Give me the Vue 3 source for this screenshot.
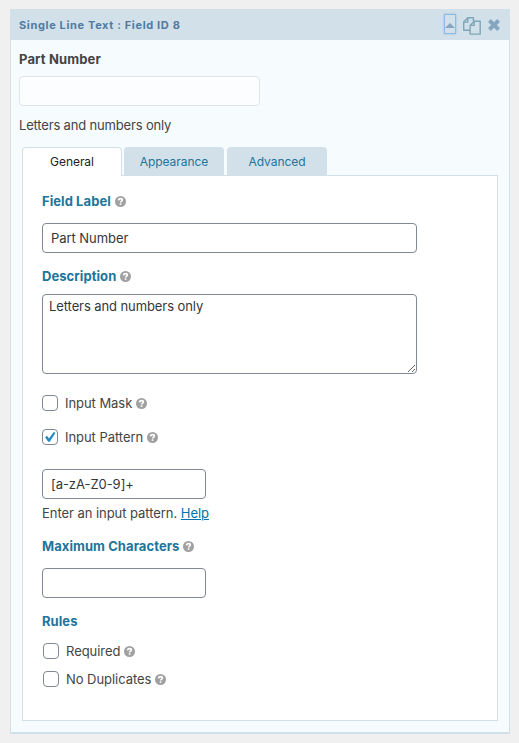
<script setup>
import { h, ref } from 'vue'

const label = ref('Part Number')
const description = ref('Letters and numbers only')
const pattern = ref('[a-zA-Z0-9]+')
const maxChars = ref('')
const active = ref('General')
const tabs = ['General', 'Appearance', 'Advanced']

const HelpIcon = () =>
  h('svg', { class: 'help-icon', width: 11, height: 11, viewBox: '0 0 11 11' }, [
    h('circle', { cx: 5.5, cy: 5.5, r: 5.5, fill: '#a0a0a0' }),
    h('path', {
      d: 'M3.5 4.4C3.6 3.1 4.5 2.6 5.5 2.6C6.7 2.6 7.4 3.2 7.4 4.1C7.4 5.2 5.6 5.2 5.6 6.6',
      fill: 'none',
      stroke: '#fff',
      'stroke-width': 1.6
    }),
    h('rect', { x: 4.7, y: 7.3, width: 1.7, height: 1.5, fill: '#fff' })
  ])
</script>

<template>
  <main class="page">
    <section class="field">
      <header class="head">
        <h1 class="head-title">Single Line Text : Field ID 8</h1>
        <div class="actions">
          <button class="toggle" aria-label="Collapse">
            <svg width="10" height="5" viewBox="0 0 10 5"><path d="M0 5L5 0L10 5Z" fill="#86a5c0" /></svg>
          </button>
          <svg class="copy" width="18" height="18" viewBox="0 0 18 18" fill="none" stroke="#7ea6b8" stroke-width="1.4" stroke-linejoin="round">
            <path d="M7.1 13.3H.7V5.1L4.8.8H10.4V4.5M4.8.8V5.1H.7" />
            <path d="M7.1 8.4L11.2 4.2H17.2V17.1H7.1ZM11.2 4.2V8.4H7.1" />
          </svg>
          <svg class="close" width="12" height="12" viewBox="0 0 12 12"><path d="M1.4 1.5L10.6 10.5M10.6 1.5L1.4 10.5" stroke="#86a5c0" stroke-width="3.9" /></svg>
        </div>
      </header>

      <div class="preview">
        <div class="preview-label">Part Number</div>
        <input class="preview-input" disabled />
        <div class="preview-note">Letters and numbers only</div>
      </div>

      <nav class="tabs">
        <button v-for="t in tabs" :key="t" class="tab" :class="{ active: active === t }" @click="active = t">{{ t }}</button>
      </nav>

      <div class="settings">
        <div class="title"><span>Field Label</span><HelpIcon /></div>
        <input v-model="label" class="text wide" />
        <div class="title desc-title"><span>Description</span><HelpIcon /></div>
        <textarea v-model="description" class="area"></textarea>

        <label class="check mask"><span class="box"></span><span>Input Mask</span><HelpIcon /></label>
        <label class="check pattern">
          <span class="box">
            <svg width="14" height="14" viewBox="0 0 14 14"><path d="M2.1 7.2L4 5.8L6 8.5L10.7 1.9L12.4 3L6.8 11.7H5.2Z" fill="#1e8cbe" /></svg>
          </span><span>Input Pattern</span><HelpIcon />
        </label>
        <input v-model="pattern" class="text" />
        <div class="hint">Enter an input pattern. <a href="#">Help</a></div>

        <div class="title max-title"><span>Maximum Characters</span><HelpIcon /></div>
        <input v-model="maxChars" class="text" />
        <div class="title rules-title"><span>Rules</span></div>
        <label class="check rule"><span class="box"></span><span>Required</span><HelpIcon /></label>
        <label class="check rule"><span class="box"></span><span>No Duplicates</span><HelpIcon /></label>
      </div>
    </section>
  </main>
</template>

<style>
body {
  background: #f0f0f0;
}
</style>

<style scoped>
* {
  box-sizing: border-box;
}
.page {
  height: 743px;
  padding: 9px 9px 9px 10px;
  font-family: Inter, sans-serif;
  font-size: 13px;
  line-height: 18px;
  letter-spacing: -0.05px;
  color: #444;
}
input,
textarea,
button {
  font: inherit;
  letter-spacing: inherit;
  margin: 0;
}
.field {
  height: 725px;
  background: #f6fbfe;
  border: 1px solid #d2e0e9;
  border-top: 0;
  border-bottom-width: 2px;
}
.head {
  display: flex;
  justify-content: space-between;
  height: 31px;
  margin: 0 -1px;
  padding: 0 10px 0 9px;
  background: #d2e0e9;
}
.head-title {
  margin: 7px 0 0;
  font-size: 11px;
  line-height: 18px;
  font-weight: 700;
  letter-spacing: 0.64px;
  color: #4f7ba3;
}
.actions {
  display: flex;
  align-items: flex-start;
}
.toggle {
  display: flex;
  align-items: center;
  justify-content: center;
  width: 12px;
  height: 20px;
  margin: 5px 7px 0 0;
  padding: 2px 0 0;
  background: none;
  border: 1px solid #8ebbe2;
  box-shadow: 0 0 2px #8ebbe2;
}
.toggle svg {
  flex: none;
}
.copy {
  margin: 8px 7px 0 0;
}
.close {
  margin-top: 10px;
}
.preview {
  height: 107px;
  padding: 10px 8px 0;
}
.preview-label {
  font-weight: 700;
  letter-spacing: 0.14px;
}
.preview-note {
  letter-spacing: -0.17px;
}
.preview-input {
  display: block;
  width: 241px;
  height: 30px;
  margin: 8px 0 10px;
  background: #fcfdff;
  border: 1px solid #e1e5e8;
  border-radius: 4px;
}
.tabs {
  display: flex;
  gap: 2px;
  height: 28px;
  padding-left: 11px;
}
.tab {
  width: 100px;
  height: 28px;
  padding: 1px 0 0;
  border: 1px solid #d2e0e9;
  border-bottom: 0;
  border-radius: 4px 4px 0 0;
  background: #d2e0e9;
  color: #21759b;
  font-size: 12px;
}
.tab:last-child {
  margin-left: 1px;
}
.tab.active {
  position: relative;
  height: 29px;
  padding: 0;
  background: #fff;
  color: #222;
}
.settings {
  width: 476px;
  height: 546px;
  margin-left: 11px;
  padding: 16px 19px 0;
  background: #fff;
  border: 1px solid #d2e0e9;
}
.title {
  display: flex;
  align-items: center;
  height: 18px;
  font-weight: 700;
  letter-spacing: 0.07px;
  color: #21759b;
}
.help-icon {
  flex: none;
  margin-left: 4px;
}
.text {
  display: block;
  width: 164px;
  height: 30px;
  padding: 0 8px;
  background: #fff;
  border: 1px solid #7e8993;
  border-radius: 4px;
  color: #32373c;
}
.wide {
  width: 375px;
  margin-top: 13px;
}
.desc-title {
  margin: 14px 0 9px;
}
.area {
  display: block;
  width: 375px;
  height: 80px;
  padding: 2px 6px;
  background: #fff;
  border: 1px solid #7e8993;
  border-radius: 4px;
  color: #32373c;
  letter-spacing: -0.09px;
}
.check {
  display: flex;
  align-items: center;
  height: 16px;
}
.box {
  flex: none;
  display: flex;
  width: 16px;
  height: 16px;
  margin-right: 7px;
  background: #fff;
  border: 1px solid #7e8993;
  border-radius: 4px;
}
.mask {
  margin: 21px 0 18px;
}
.pattern {
  margin-bottom: 24px;
}
.hint {
  margin: 5px 0 15px;
}
.hint a {
  color: #0073aa;
}
.max-title {
  margin-bottom: 13px;
}
.rules-title {
  margin: 14px 0 13px;
}
.rule {
  margin: 0 0 12px 1px;
}
</style>
